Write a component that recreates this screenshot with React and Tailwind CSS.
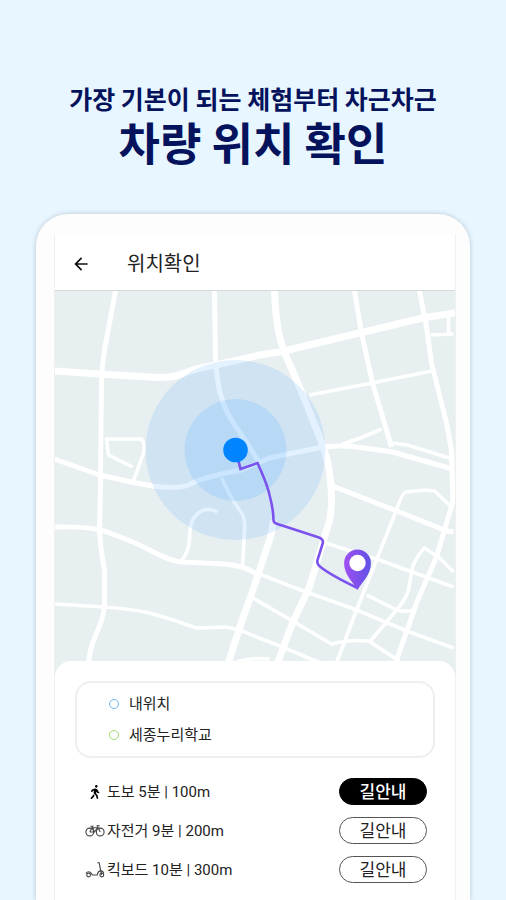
import React, { useState } from "react";
import { MdArrowBack } from "react-icons/md";
import { FaWalking } from "react-icons/fa";

const BikeIcon = () => (
  <svg
    viewBox="0 0 20 14"
    className="w-5 h-3.5"
    fill="none"
    stroke="#444"
    strokeWidth="1.1"
    aria-hidden="true"
  >
    <circle cx="4.8" cy="8" r="3.9" />
    <circle cx="15.2" cy="8" r="3.9" />
    <path d="M4.8 8L7 3.8h5.5L9.5 8H4.8M9.5 8L6.9 2.2M5.5 2.2h3M15.2 8L12.2 1.7h2.6" />
  </svg>
);

const ScooterIcon = () => (
  <svg
    viewBox="0 0 20 18"
    className="w-5 h-4.5"
    fill="none"
    stroke="#444"
    strokeWidth="1.1"
    aria-hidden="true"
  >
    <circle cx="3.6" cy="14" r="1.9" />
    <circle cx="16.8" cy="14" r="1.9" />
    <path d="M.8 12.4Q3.600 9.200 6.400 12.400L7.400 14h4.800q.6-3.800 3.600-4.400M12.200 1.800h2l1.400 7.400 1 4.600M15.800 9.600q2.400.4 3 2.800" />
  </svg>
);

const roads = {
  main: [
    "M0 80L45 83L95 86Q118 88 130 82Q142 77 161 74L205 64L225 61L305 42L368 27L401 22",
    "M220 0Q221 30 226 49Q228 58 232 66L245 96L265 146Q275 172 276 189Q279 220 273 236L255 296L238 332L223 372",
    "M174 372Q184 338 195 309L205 279L215 249Q218 240 219 229",
  ],
  middle: [
    "M61 0L50 59Q47 80 47 89L46 189L45 239Q46 258 50 279V316Q48 330 42 342Q35 358 34 372",
    "M160 0L161 69Q163 95 167 106Q170 118 177 129L195 156L205 172",
    "M300 0L307 42L318 92L337 156",
    "M365 0L372 36L377 72L392 132L397 159L398 199Q399 212 395 222L382 266L362 312L341 372",
    "M0 168L45 184L82 192Q105 197 115 196Q127 197 134 194Q148 186 187 179L215 167L268 156Q290 154 302 156L338 161L398 178",
    "M0 236Q40 235 55 242Q78 250 95 259Q118 271 128 271L170 273Q190 275 200 282",
    "M278 195L345 221L392 240L399 241",
  ],
  minor: [
    "M0 313L50 316Q78 318 95 322Q118 328 142 337L172 336Q190 340 202 346L228 356L266 372",
    "M195 279L238 296L302 319L355 341L399 357",
    "M195 305L245 334L277 353Q297 348 314 350L345 370",
    "M268 251L322 268L399 296",
    "M282 372L302 319L322 269L342 219Q348 201 352 201Q370 198 380 200L397 216",
    "M255 104L318 92L377 80",
    "M312 304L342 319Q354 322 362 318",
    "M315 351L342 319Q352 307 354 299L358 276Q363 264 370 257L385 267L399 281",
    "M376 44L399 43M394 43V26",
    "M288 153Q305 148 327 138M337 152L353 154L398 168",
    "M78 176L54 164L52 148H87Q91 153 89 162L79 190",
    "M127 269Q134 262 135 249Q135 237 138 229Q148 213 163 221",
    "M167 187Q175 205 187 222Q191 228 190 239L188 276",
    "M180 372Q195 366 215 368",
  ],
};

const LocationMap = () => (
  <svg
    viewBox="0 0 401 384"
    preserveAspectRatio="xMidYMin slice"
    className="block w-full h-96 bg-[#e7eff1]"
    role="img"
    aria-label="차량 위치 지도"
  >
    <defs>
      <linearGradient id="pin" x1="0" x2="1">
        <stop offset="0" stopColor="#a050f0" />
        <stop offset="1" stopColor="#5f51e6" />
      </linearGradient>
    </defs>
    <g fill="none" stroke="#fff" strokeLinejoin="round">
      <g strokeWidth="7">
        {roads.main.map((d) => (
          <path key={d} d={d} />
        ))}
      </g>
      <g strokeWidth="5">
        {roads.middle.map((d) => (
          <path key={d} d={d} />
        ))}
      </g>
      <g strokeWidth="3.6">
        {roads.minor.map((d) => (
          <path key={d} d={d} />
        ))}
      </g>
    </g>

    {/* Current position */}
    <circle cx="181" cy="159" r="90" fill="#58aaff" fillOpacity="0.16" />
    <circle cx="181" cy="159" r="51" fill="#40a8ff" fillOpacity="0.16" />

    {/* Route */}
    <path
      d="M183 166L186 178L203 172Q213 194 215 204Q219 219 219 229Q219 232 223 233L263 246Q270 248 268 253L263 269Q262 273 266 276Q276 284 303 297"
      fill="none"
      stroke="#7b52ee"
      strokeWidth="2.6"
    />
    <circle cx="181" cy="159" r="12.3" fill="#0084ff" />
    <path
      d="M303 299C298 290 289.6 284 289.6 272A13.4 13.4 0 0 1 316.4 272C316.4 284 308 290 303 299Z"
      fill="url(#pin)"
    />
    <circle cx="303" cy="272" r="8.2" fill="#fff" />
  </svg>
);

const options = [
  {
    id: "walk",
    icon: <FaWalking className="w-3.5 h-3.5 text-black" />,
    label: "도보 5분 | 100m",
  },
  { id: "bike", icon: <BikeIcon />, label: "자전거 9분 | 200m" },
  { id: "kickboard", icon: <ScooterIcon />, label: "킥보드 10분 | 300m" },
];

const App = () => {
  const [selected, setSelected] = useState("walk");

  return (
    <div className="min-h-screen flex flex-col px-9 bg-[#e8f6ff] font-['Roboto','Noto_Sans_CJK_KR',sans-serif]">
      <h1 className="pt-[82px] text-center font-bold text-[#05125c] font-['Noto_Sans_CJK_KR',sans-serif]">
        <span className="block text-[25px] leading-8">
          가장 기본이 되는 체험부터 차근차근
        </span>
        <span className="block text-[45px] leading-14">차량 위치 확인</span>
      </h1>

      {/* Phone */}
      <div className="flex-1 flex flex-col mt-11 pt-5 pl-[18px] pr-[14px] rounded-t-[32px] bg-[#fdfdfd] shadow-[0_0_5px_#b4c6d2]">
        <div className="flex-1 flex flex-col border-x border-[#f0f0f0] bg-white">
          <header className="flex items-center gap-9 h-14 pt-1 pl-4">
            <button type="button" aria-label="뒤로" className="text-[#111]">
              <MdArrowBack className="w-5 h-5" />
            </button>
            <h2 className="text-[20px] leading-8 text-[#222]">위치확인</h2>
          </header>

          <main className="flex-1 flex flex-col">
            <div className="border-t border-[#d5dadb]">
              <LocationMap />
            </div>

            <section className="relative flex-1 -mt-3.5 pt-5 px-5 pb-4 rounded-t-2xl bg-white">
              <div className="flex flex-col gap-[7px] px-8 py-[9px] rounded-2xl border-2 border-[#efefef] text-[15px] leading-6 text-[#222]">
                <p className="flex items-center gap-2.5">
                  <span className="w-2.5 h-2.5 rounded-full border border-[#6db5f2]" />
                  내위치
                </p>
                <p className="flex items-center gap-2.5">
                  <span className="w-2.5 h-2.5 rounded-full border border-[#9bdc6c]" />
                  세종누리학교
                </p>
              </div>

              <ul className="flex flex-col gap-3 mt-5 px-2">
                {options.map((option) => (
                  <li key={option.id} className="flex items-center">
                    <span className="flex justify-center w-6 shrink-0">
                      {option.icon}
                    </span>
                    <span className="text-[15px] leading-6 text-[#222]">
                      {option.label}
                    </span>
                    <button
                      type="button"
                      onClick={() => setSelected(option.id)}
                      className={
                        selected === option.id
                          ? "ml-auto w-22 h-[27px] rounded-full border border-black bg-black text-[17px] leading-6 font-medium text-white"
                          : "ml-auto w-22 h-[27px] rounded-full border border-[#555] bg-white text-[17px] leading-6 text-[#222]"
                      }
                    >
                      길안내
                    </button>
                  </li>
                ))}
              </ul>
            </section>
          </main>
        </div>
      </div>
    </div>
  );
};

export default App;
